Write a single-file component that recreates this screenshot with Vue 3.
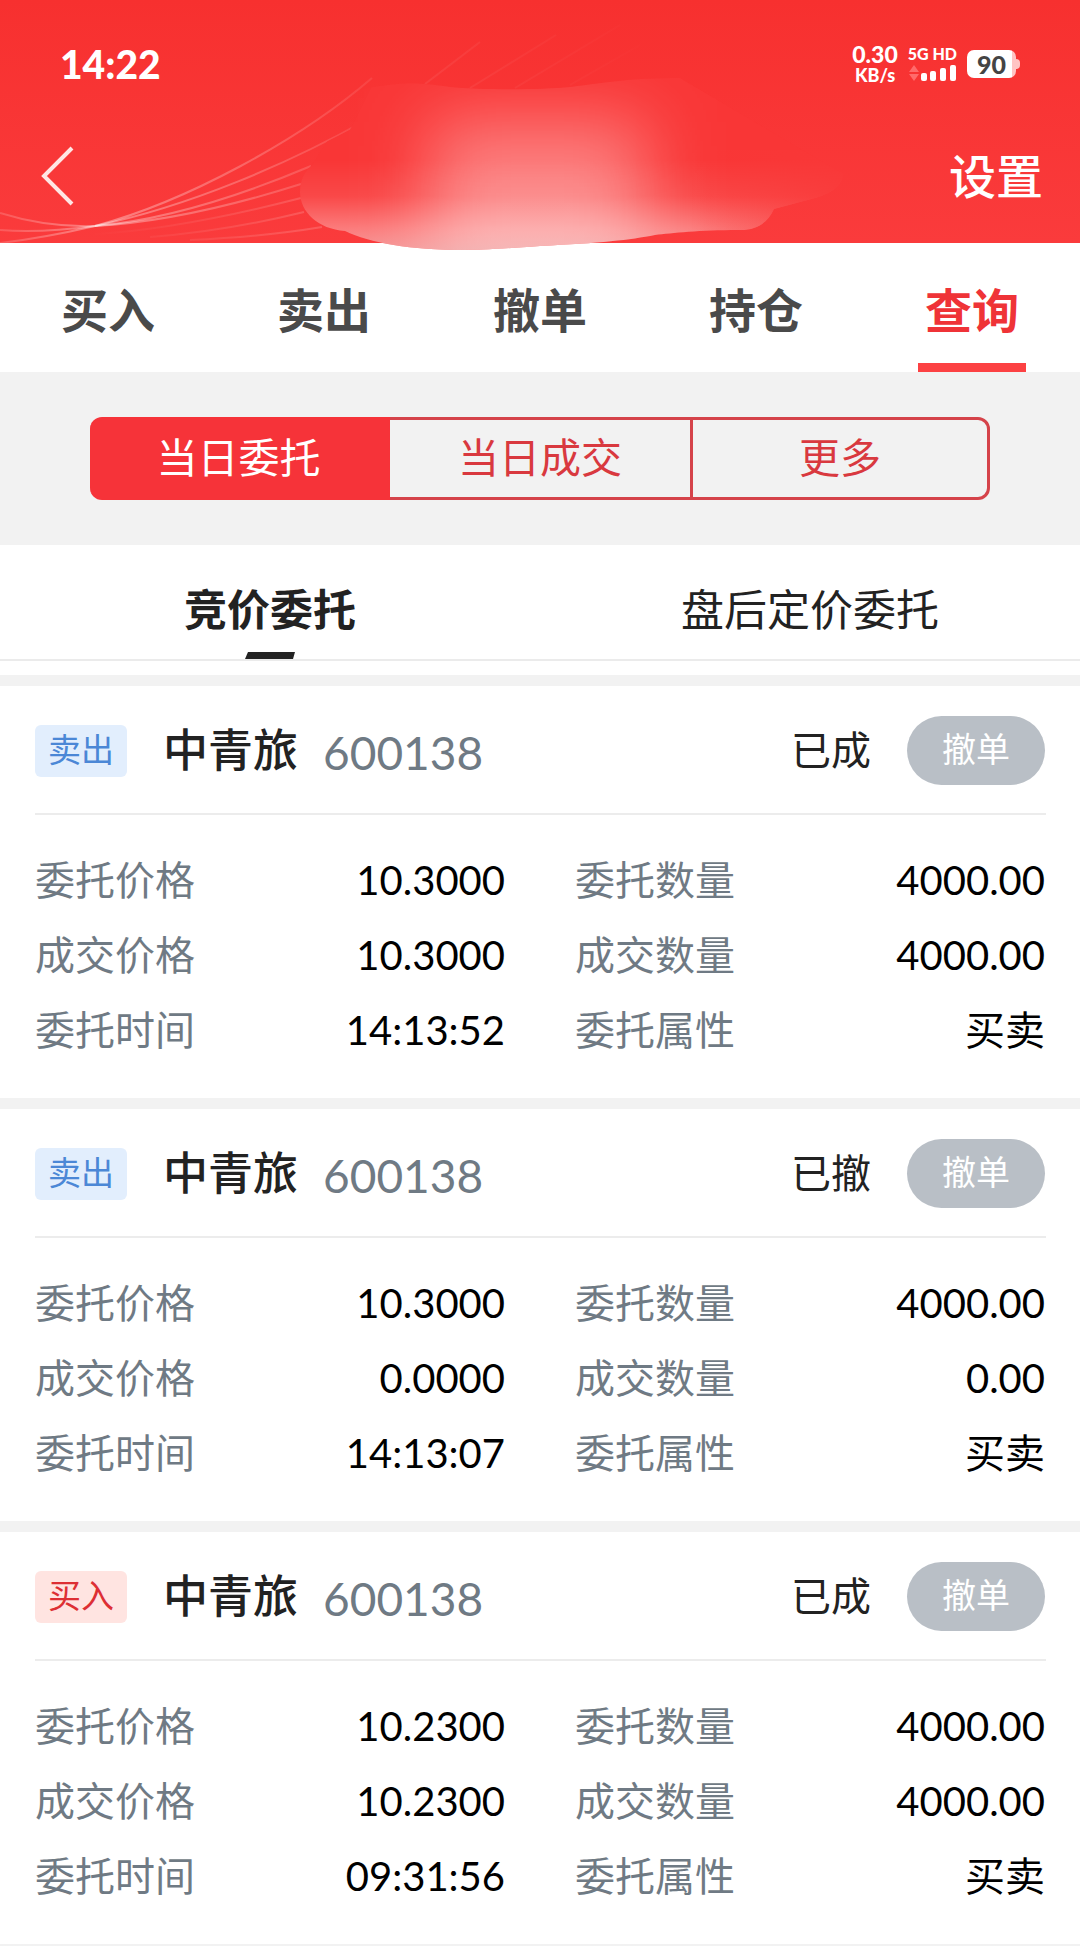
<script setup>
import { ref } from 'vue'

const mainTabs = ['买入', '卖出', '撤单', '持仓', '查询']
const activeMain = ref('查询')

const segments = ['当日委托', '当日成交', '更多']
const activeSegment = ref('当日委托')

const orderTabs = ['竞价委托', '盘后定价委托']
const activeOrderTab = ref('竞价委托')

const orders = [
  { side: '卖出', state: '已成', price: '10.3000', dealPrice: '10.3000', time: '14:13:52', qty: '4000.00', dealQty: '4000.00' },
  { side: '卖出', state: '已撤', price: '10.3000', dealPrice: '0.0000', time: '14:13:07', qty: '4000.00', dealQty: '0.00' },
  { side: '买入', state: '已成', price: '10.2300', dealPrice: '10.2300', time: '09:31:56', qty: '4000.00', dealQty: '4000.00' },
]

const fieldsOf = (o) => [
  ['委托价格', o.price],
  ['委托数量', o.qty],
  ['成交价格', o.dealPrice],
  ['成交数量', o.dealQty],
  ['委托时间', o.time],
  ['委托属性', '买卖'],
]
</script>

<template>
  <div class="page">
    <header class="top">
      <svg class="art" viewBox="0 0 1080 252" preserveAspectRatio="none" aria-hidden="true">
        <defs>
          <linearGradient id="fade" gradientUnits="userSpaceOnUse" x1="0" y1="0" x2="660" y2="0">
            <stop offset="0" stop-color="#fff" stop-opacity=".16" />
            <stop offset=".15" stop-color="#fff" stop-opacity=".36" />
            <stop offset=".38" stop-color="#fff" stop-opacity=".22" />
            <stop offset=".56" stop-color="#fff" stop-opacity=".08" />
            <stop offset="1" stop-color="#fff" stop-opacity="0" />
          </linearGradient>
          <linearGradient id="faint" gradientUnits="userSpaceOnUse" x1="90" y1="0" x2="310" y2="0">
            <stop offset="0" stop-color="#fff" stop-opacity="0" />
            <stop offset="1" stop-color="#fff" stop-opacity=".16" />
          </linearGradient>
          <linearGradient id="rise" gradientUnits="userSpaceOnUse" x1="0" y1="160" x2="0" y2="250">
            <stop offset="0" stop-color="#fff" stop-opacity="0" />
            <stop offset=".4" stop-color="#fff" stop-opacity=".09" />
            <stop offset=".75" stop-color="#fff" stop-opacity=".34" />
            <stop offset="1" stop-color="#f0e6e6" stop-opacity=".54" />
          </linearGradient>
          <linearGradient id="side" gradientUnits="userSpaceOnUse" x1="690" y1="0" x2="850" y2="0">
            <stop offset="0" stop-color="#f93838" stop-opacity="0" />
            <stop offset="1" stop-color="#f93838" stop-opacity=".8" />
          </linearGradient>
          <filter id="soft" x="-50%" y="-80%" width="200%" height="260%">
            <feGaussianBlur stdDeviation="36" />
          </filter>
          <clipPath id="smear">
            <path d="M360 90C400 80 430 84 450 87C480 90 540 90 570 87C610 82 630 78 680 78L843 174C842 188 828 194 815 198L774 209C768 222 757 231 738 230C700 230 672 233 655 235C630 240 600 243 540 246C500 249 480 250 465 250C410 250 370 243 345 231C318 229 300 212 300 192C300 180 304 172 312 165Z" />
          </clipPath>
        </defs>
        <g fill="none" stroke="url(#fade)" stroke-width="2">
          <path d="M0 213C35 224 65 227 95 226C185 202 300 140 372 78" />
          <path d="M0 230C35 233 65 230 95 226C190 206 290 163 366 120" />
          <path d="M0 243C35 239 65 233 95 226C165 220 240 196 311 166" />
          <path d="M95 226C165 222 235 205 301 184" />
          <path d="M425 84L480 42M470 88L556 35M515 88L620 25M570 85L640 45" />
        </g>
        <g fill="none" stroke="url(#faint)" stroke-width="2">
          <path d="M95 234C165 230 235 215 301 198" />
          <path d="M150 237C205 233 255 224 304 212" />
          <path d="M190 240C235 238 280 234 322 227" />
        </g>
        <g clip-path="url(#smear)">
          <path d="M290 252V160L350 130L380 70H850V252Z" fill="#f93636" />
          <rect x="430" y="122" width="215" height="180" fill="#fff" fill-opacity=".38" filter="url(#soft)" />
          <rect x="290" y="150" width="560" height="102" fill="url(#rise)" />
          <rect x="690" y="150" width="160" height="102" fill="url(#side)" />
        </g>
      </svg>

      <div class="status">
        <span class="clock">14:22</span>
        <div class="status-right">
          <div class="speed"><span class="rate">0.30</span><span class="unit">KB/s</span></div>
          <div class="network">
            <span class="net-label">5G HD</span>
            <svg class="signal" viewBox="0 0 48 18" aria-hidden="true">
              <path d="M6 1l5 7H1zM6 17l5-7H1z" fill="#ff6b6b" />
              <g fill="#fff">
                <rect x="13" y="9" width="6" height="8" rx="2" />
                <rect x="22" y="7" width="6" height="10" rx="2" />
                <rect x="32" y="4" width="6" height="13" rx="2" />
                <rect x="42" y="1" width="6" height="16" rx="2" />
              </g>
            </svg>
          </div>
          <div class="battery"><span>90</span></div>
        </div>
      </div>

      <div class="titlebar">
        <button class="back" type="button" aria-label="返回">
          <svg viewBox="0 0 34 62" aria-hidden="true">
            <path d="M31 3L3 31L31 59" fill="none" stroke="#ffe6e4" stroke-width="4" />
          </svg>
        </button>
        <button class="settings" type="button">设置</button>
      </div>
    </header>

    <nav class="main-tabs">
      <button
        v-for="t in mainTabs"
        :key="t"
        type="button"
        :class="{ active: t === activeMain }"
        @click="activeMain = t"
      >{{ t }}</button>
    </nav>

    <div class="segment-area">
      <div class="segments">
        <button
          v-for="s in segments"
          :key="s"
          type="button"
          :class="{ active: s === activeSegment }"
          @click="activeSegment = s"
        >{{ s }}</button>
      </div>
    </div>

    <div class="order-tabs-wrap">
      <div class="order-tabs">
        <button
          v-for="t in orderTabs"
          :key="t"
          type="button"
          :class="{ active: t === activeOrderTab }"
          @click="activeOrderTab = t"
        >{{ t }}</button>
      </div>
    </div>

    <main>
      <article v-for="o in orders" :key="o.time" class="card">
        <div class="card-head">
          <span class="tag" :class="{ buy: o.side === '买入' }">{{ o.side }}</span>
          <h2 class="name">中青旅</h2>
          <span class="code">600138</span>
          <span class="state">{{ o.state }}</span>
          <button class="cancel" type="button">撤单</button>
        </div>
        <dl class="fields">
          <div v-for="[label, value] in fieldsOf(o)" :key="label" class="field">
            <dt>{{ label }}</dt>
            <dd>{{ value }}</dd>
          </div>
        </dl>
      </article>
    </main>
  </div>
</template>

<style>
body {
  margin: 0;
  background: #f2f2f2;
}
</style>

<style scoped>
.page {
  font-family: Lato, "Noto Sans CJK SC", sans-serif;
  color: #222;
}
button {
  box-sizing: border-box;
  margin: 0;
  padding: 0;
  border: 0;
  background: none;
  font: inherit;
  color: inherit;
  cursor: pointer;
}

.top {
  position: relative;
  z-index: 1;
  height: 243px;
  background: linear-gradient(#f7302f, #fa3b3c);
  color: #fff;
}
.art {
  position: absolute;
  top: 0;
  left: 0;
  width: 100%;
  height: 252px;
  pointer-events: none;
}
.status {
  position: relative;
  display: flex;
  align-items: center;
  justify-content: space-between;
  height: 128px;
  padding: 0 60px;
}
.clock {
  font-size: 39px;
  font-weight: 900;
  line-height: 48px;
}
.status-right {
  display: flex;
  align-items: center;
  gap: 10px;
}
.speed,
.network {
  display: flex;
  flex-direction: column;
  align-items: center;
}
.speed {
  font-weight: 900;
}
.rate {
  font-size: 23px;
  line-height: 21px;
}
.unit {
  font-size: 18px;
  line-height: 20px;
}
.net-label {
  font-size: 16px;
  font-weight: 900;
  line-height: 16px;
  white-space: nowrap;
}
.signal {
  width: 48px;
  height: 18px;
  margin-top: 2px;
}
.battery {
  position: relative;
  width: 49px;
  height: 28px;
  border-radius: 7px;
  background: linear-gradient(90deg, #fff 45px, #ffc4c4 45px);
  color: #444;
  font-size: 25px;
  font-weight: 900;
  line-height: 28px;
  text-align: center;
  margin-right: 4px;
}
.battery::after {
  content: "";
  position: absolute;
  top: 9px;
  right: -4px;
  width: 4px;
  height: 10px;
  border-radius: 0 4px 4px 0;
  background: #ffc4c4;
}
.titlebar {
  position: relative;
  display: flex;
  align-items: center;
  justify-content: space-between;
  height: 96px;
  padding: 0 37px 0 41px;
}
.back svg {
  display: block;
  width: 34px;
  height: 62px;
}
.settings {
  font-size: 47px;
  font-weight: 500;
  line-height: 64px;
}

.main-tabs {
  display: flex;
  height: 129px;
  background: #fff;
}
.main-tabs button {
  position: relative;
  flex: 1;
  font-size: 47px;
  font-weight: 700;
  color: #4a4a4a;
}
.main-tabs .active {
  color: #ef3337;
}
.main-tabs .active::after {
  content: "";
  position: absolute;
  left: 25%;
  bottom: 0;
  width: 50%;
  height: 9px;
  background: #fc4143;
}

.segment-area {
  padding: 45px 90px;
  background: #f2f2f2;
}
.segments {
  display: grid;
  grid-template-columns: repeat(3, 1fr);
  height: 83px;
}
.segments button {
  padding-bottom: 2px;
  border: 3px solid #d5434a;
  border-left-width: 0;
  font-size: 41px;
  line-height: 56px;
  color: #d9393f;
}
.segments button:first-child {
  border-radius: 12px 0 0 12px;
}
.segments button:nth-child(2) {
  border-right-width: 0;
}
.segments button:last-child {
  border-left-width: 3px;
  border-radius: 0 12px 12px 0;
}
.segments .active {
  border-color: #f63339;
  background: #f63339;
  color: #fff;
}

.order-tabs-wrap {
  padding-bottom: 14px;
  background: #fff;
}
.order-tabs {
  display: flex;
  height: 114px;
  border-bottom: 2px solid #ebebeb;
}
.order-tabs button {
  position: relative;
  flex: 1;
  padding-top: 16px;
  font-size: 43px;
  line-height: 64px;
}
.order-tabs .active {
  font-weight: 700;
}
.order-tabs .active::after {
  content: "";
  position: absolute;
  left: calc(50% - 25px);
  bottom: 0;
  width: 50px;
  height: 7px;
  background: #222;
  clip-path: polygon(3px 0, 100% 0, 48px 100%, 0 100%);
}

.card {
  margin-top: 11px;
  background: #fff;
}
.card-head {
  display: flex;
  align-items: center;
  height: 127px;
  margin: 0 34px 0 35px;
  border-bottom: 2px solid #ececec;
}
.tag {
  width: 92px;
  height: 52px;
  margin-top: 2px;
  border-radius: 6px;
  background: #e2eefd;
  color: #4b87d6;
  font-size: 33px;
  line-height: 48px;
  text-align: center;
}
.tag.buy {
  background: #ffe4e1;
  color: #dd2f34;
}
.name {
  margin: 0 25px 0 36px;
  font-size: 45px;
  font-weight: 500;
  line-height: 64px;
}
.code {
  padding-top: 6px;
  color: #6f7a84;
  font-size: 46px;
  line-height: 64px;
}
.state {
  margin-left: auto;
  font-size: 40px;
  line-height: 56px;
}
.cancel {
  width: 138px;
  height: 69px;
  margin: 2px 1px 0 36px;
  padding-bottom: 4px;
  border-radius: 35px;
  background: #b9bfc6;
  color: #fff;
  font-size: 34px;
  line-height: 48px;
}
.fields {
  display: grid;
  grid-template-columns: 1fr 1fr;
  grid-auto-rows: 75px;
  margin: 0;
  padding: 27px 0 31px;
}
.field {
  display: flex;
  align-items: center;
  justify-content: space-between;
  padding: 0 35px;
  line-height: 56px;
}
dt {
  color: #6f7a84;
  font-size: 40px;
}
dd {
  margin: 0;
  color: #000;
  font-size: 40px;
}
</style>
